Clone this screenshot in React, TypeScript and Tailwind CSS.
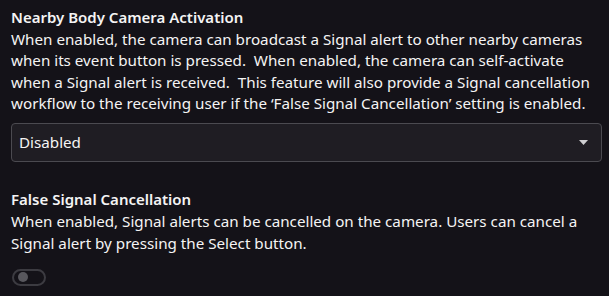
import React from "react";

export default function App() {
  return (
    <div
      className="w-[609px] h-[296px] bg-[#141218] text-[#f4f4f4] px-[11px] pt-[5px] overflow-hidden"
      style={{ fontFamily: '"Noto Sans", "Open Sans", sans-serif' }}
    >
      <div className="text-[15px] font-semibold leading-[24px]">Nearby Body Camera Activation</div>
      <p className="text-[15.2px] leading-[21.33px]">
        When enabled, the camera can broadcast a Signal alert to other nearby cameras when its event button is pressed.&nbsp; When enabled, the camera can self-activate when a Signal alert is received.&nbsp; This feature will also provide a Signal cancellation workflow to the receiving user if the ‘False Signal Cancellation’ setting is enabled.
      </p>
      <div className="mt-[9px] h-[39px] w-[591px] rounded-[4px] border border-[#4b4a50] bg-[#1f1d23] flex items-center justify-between pl-[7px] pr-[13px]">
        <span className="text-[15.2px]">Disabled</span>
        <svg width="9" height="5" viewBox="0 0 9 5">
          <path d="M0 0 L9 0 L4.5 5 Z" fill="#cfcfd2" />
        </svg>
      </div>
      <div className="mt-[25px] text-[15px] font-semibold leading-[24px]">False Signal Cancellation</div>
      <p className="text-[15.2px] leading-[21.33px]">
        When enabled, Signal alerts can be cancelled on the camera. Users can cancel a Signal alert by pressing the Select button.
      </p>
      <div className="mt-[15px] ml-[1px] w-[34px] h-[17px] rounded-full border-2 border-[#3c3b41] flex items-center pl-[4px]">
        <div className="w-[10px] h-[10px] rounded-full bg-[#58575d]" />
      </div>
    </div>
  );
}
